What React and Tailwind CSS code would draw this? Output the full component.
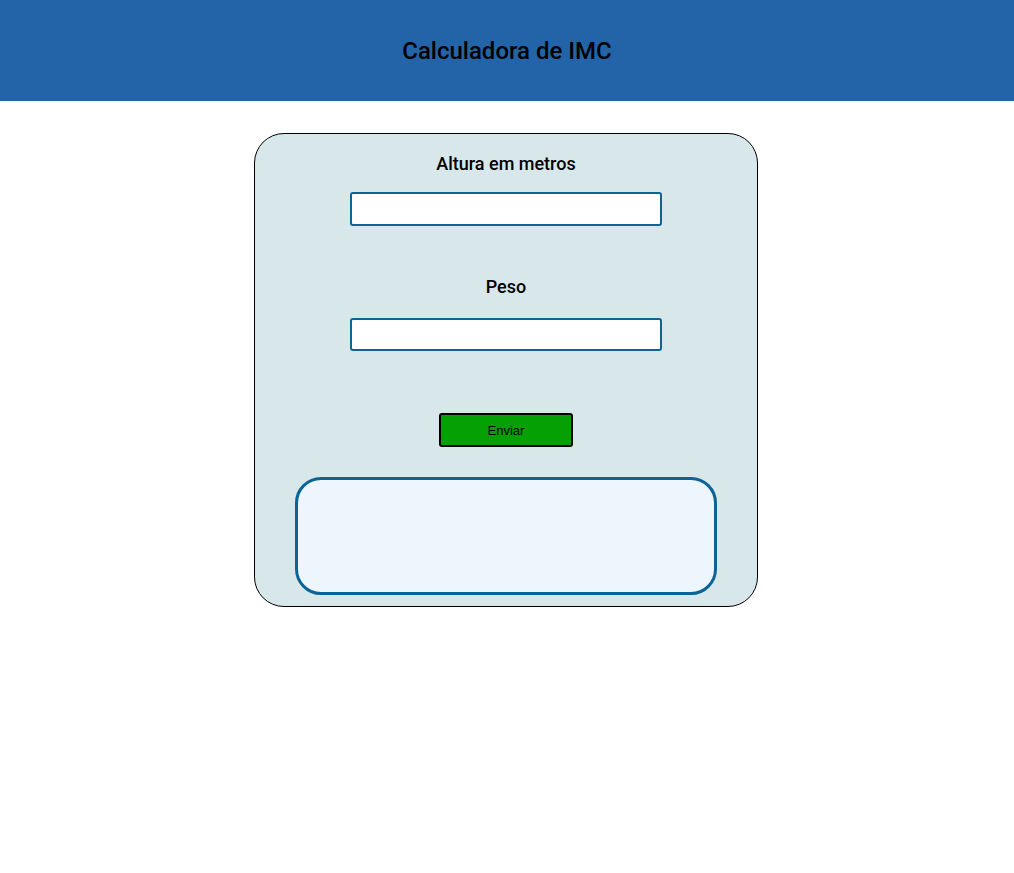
import React, { useState } from 'react';

export default function App(){
  const [altura, setAltura] = useState('');
  const [peso, setPeso] = useState('');

  return (
    <div className="min-h-screen bg-white font-['Roboto',sans-serif] text-black">
      <header className="h-[101px] bg-[#2364a9] flex items-center justify-center">
        <h1 className="text-[24px] font-medium">Calculadora de IMC</h1>
      </header>

      <div className="flex justify-center pr-[2px]">
        <div className="mt-[32px] w-[504px] h-[474px] rounded-[30px] border border-black bg-[#d8e7ea] flex flex-col items-center pt-[16px]">
          <label className="text-[18px] leading-[28px] font-medium">Altura em metros</label>
          <input
            value={altura}
            onChange={e=>setAltura(e.target.value)}
            className="mt-[14px] w-[312px] h-[34px] bg-white border-2 border-[#0b6396] rounded-[3px] outline-none px-2"
          />

          <label className="mt-[47px] text-[18px] leading-[28px] font-medium">Peso</label>
          <input
            value={peso}
            onChange={e=>setPeso(e.target.value)}
            className="mt-[17px] w-[312px] h-[33px] bg-white border-2 border-[#0b6396] rounded-[3px] outline-none px-2"
          />

          <button className="mt-[62px] w-[134px] h-[34px] bg-[#04a004] border-2 border-black rounded-[3px] text-[13px] pt-[1px] font-['Liberation_Sans',sans-serif]">Enviar</button>

          <div className="mt-[30px] w-[422px] h-[118px] rounded-[26px] border-[3px] border-[#0b6396] bg-[#eef6fd]"></div>
        </div>
      </div>
    </div>
  );
}
